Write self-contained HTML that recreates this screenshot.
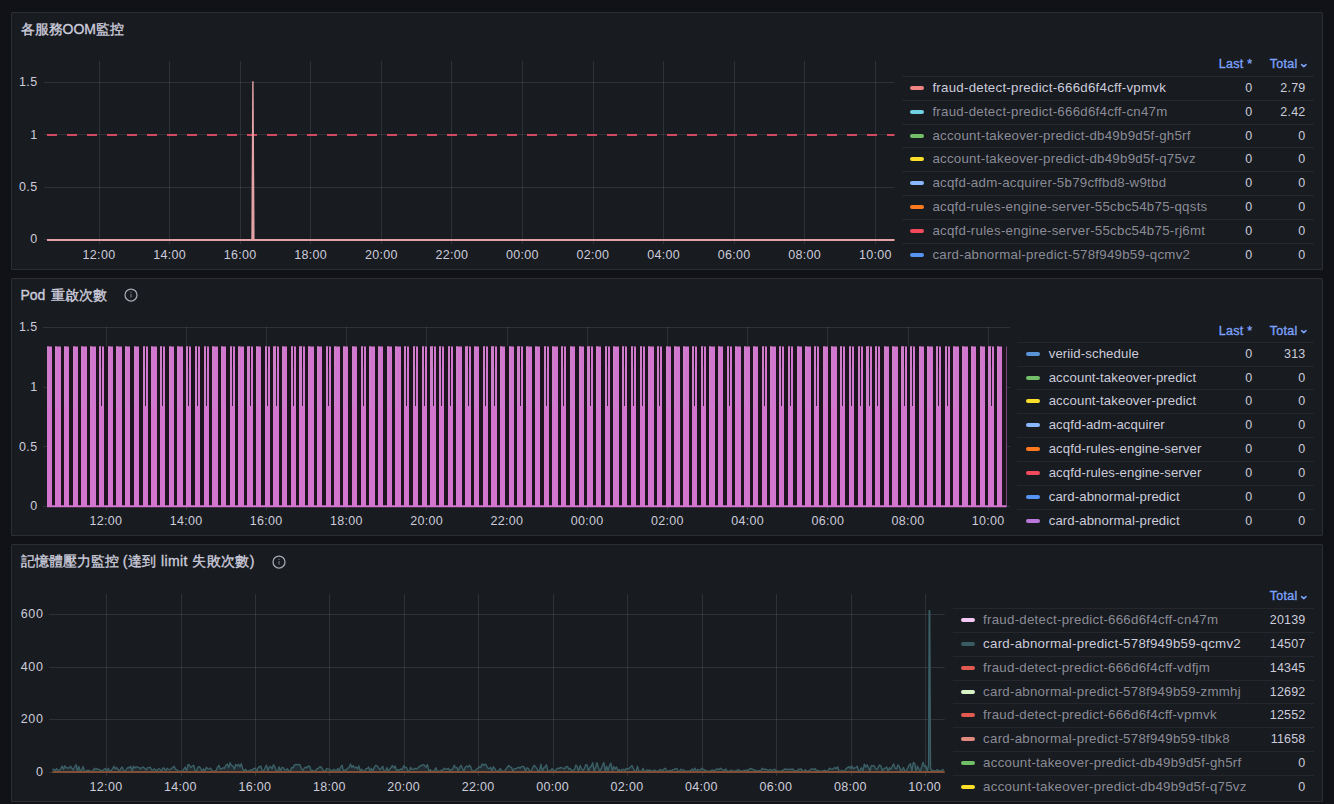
<!DOCTYPE html><html><head><meta charset="utf-8"><style>html,body{margin:0;padding:0;background:#111217;width:1334px;height:804px;overflow:hidden;font-family:"Liberation Sans", sans-serif}</style></head><body><div style="position:relative;width:1334px;height:804px;overflow:hidden">
<div style="position:absolute;left:11px;top:12px;width:1312px;height:258px;box-sizing:border-box;border:1px solid rgba(204,204,220,0.105);border-radius:1.5px;background:#181b1f"></div>
<div style="position:absolute;left:20.50px;top:19.45px;line-height:20px;font-size:14px;color:#ccccdc;font-weight:400;letter-spacing:0px;white-space:nowrap;-webkit-text-stroke:0.35px #ccccdc;">各服務OOM監控</div>
<svg style="position:absolute;left:0;top:0" width="1334" height="804"><line x1="44" y1="82.5" x2="894.5" y2="82.5" stroke="rgba(240,250,255,0.105)" stroke-width="1"/><line x1="44" y1="134.5" x2="894.5" y2="134.5" stroke="rgba(240,250,255,0.105)" stroke-width="1"/><line x1="44" y1="187.5" x2="894.5" y2="187.5" stroke="rgba(240,250,255,0.105)" stroke-width="1"/><line x1="44" y1="239.5" x2="894.5" y2="239.5" stroke="rgba(240,250,255,0.105)" stroke-width="1"/><line x1="99.5" y1="61" x2="99.5" y2="244" stroke="rgba(240,250,255,0.105)" stroke-width="1"/><line x1="169.5" y1="61" x2="169.5" y2="244" stroke="rgba(240,250,255,0.105)" stroke-width="1"/><line x1="240.5" y1="61" x2="240.5" y2="244" stroke="rgba(240,250,255,0.105)" stroke-width="1"/><line x1="310.5" y1="61" x2="310.5" y2="244" stroke="rgba(240,250,255,0.105)" stroke-width="1"/><line x1="381.5" y1="61" x2="381.5" y2="244" stroke="rgba(240,250,255,0.105)" stroke-width="1"/><line x1="451.5" y1="61" x2="451.5" y2="244" stroke="rgba(240,250,255,0.105)" stroke-width="1"/><line x1="522.5" y1="61" x2="522.5" y2="244" stroke="rgba(240,250,255,0.105)" stroke-width="1"/><line x1="593.5" y1="61" x2="593.5" y2="244" stroke="rgba(240,250,255,0.105)" stroke-width="1"/><line x1="663.5" y1="61" x2="663.5" y2="244" stroke="rgba(240,250,255,0.105)" stroke-width="1"/><line x1="734.5" y1="61" x2="734.5" y2="244" stroke="rgba(240,250,255,0.105)" stroke-width="1"/><line x1="804.5" y1="61" x2="804.5" y2="244" stroke="rgba(240,250,255,0.105)" stroke-width="1"/><line x1="875.5" y1="61" x2="875.5" y2="244" stroke="rgba(240,250,255,0.105)" stroke-width="1"/><line x1="47" y1="134.9" x2="894.5" y2="134.9" stroke="#d24a62" stroke-width="2" stroke-dasharray="10 10"/><line x1="47" y1="239.9" x2="894.5" y2="239.9" stroke="#e3a2a6" stroke-width="2"/><path d="M251.3 240.5 L252.2 81.2 L253.6 81.2 L254.6 240.5 Z" fill="#e3a2a6"/></svg>
<div style="position:absolute;right:1296.40px;top:72.17px;line-height:20px;font-size:12.5px;color:#ccccdc;font-weight:400;letter-spacing:0.45px;white-space:nowrap;">1.5</div>
<div style="position:absolute;right:1296.40px;top:124.54px;line-height:20px;font-size:12.5px;color:#ccccdc;font-weight:400;letter-spacing:0.45px;white-space:nowrap;">1</div>
<div style="position:absolute;right:1296.40px;top:176.91px;line-height:20px;font-size:12.5px;color:#ccccdc;font-weight:400;letter-spacing:0.45px;white-space:nowrap;">0.5</div>
<div style="position:absolute;right:1296.40px;top:229.27px;line-height:20px;font-size:12.5px;color:#ccccdc;font-weight:400;letter-spacing:0.45px;white-space:nowrap;">0</div>
<div style="position:absolute;left:-101.00px;width:400px;text-align:center;top:245.37px;line-height:20px;font-size:12.5px;color:#ccccdc;font-weight:400;letter-spacing:0.3px;white-space:nowrap;">12:00</div>
<div style="position:absolute;left:-30.43px;width:400px;text-align:center;top:245.37px;line-height:20px;font-size:12.5px;color:#ccccdc;font-weight:400;letter-spacing:0.3px;white-space:nowrap;">14:00</div>
<div style="position:absolute;left:40.14px;width:400px;text-align:center;top:245.37px;line-height:20px;font-size:12.5px;color:#ccccdc;font-weight:400;letter-spacing:0.3px;white-space:nowrap;">16:00</div>
<div style="position:absolute;left:110.71px;width:400px;text-align:center;top:245.37px;line-height:20px;font-size:12.5px;color:#ccccdc;font-weight:400;letter-spacing:0.3px;white-space:nowrap;">18:00</div>
<div style="position:absolute;left:181.28px;width:400px;text-align:center;top:245.37px;line-height:20px;font-size:12.5px;color:#ccccdc;font-weight:400;letter-spacing:0.3px;white-space:nowrap;">20:00</div>
<div style="position:absolute;left:251.85px;width:400px;text-align:center;top:245.37px;line-height:20px;font-size:12.5px;color:#ccccdc;font-weight:400;letter-spacing:0.3px;white-space:nowrap;">22:00</div>
<div style="position:absolute;left:322.42px;width:400px;text-align:center;top:245.37px;line-height:20px;font-size:12.5px;color:#ccccdc;font-weight:400;letter-spacing:0.3px;white-space:nowrap;">00:00</div>
<div style="position:absolute;left:392.99px;width:400px;text-align:center;top:245.37px;line-height:20px;font-size:12.5px;color:#ccccdc;font-weight:400;letter-spacing:0.3px;white-space:nowrap;">02:00</div>
<div style="position:absolute;left:463.56px;width:400px;text-align:center;top:245.37px;line-height:20px;font-size:12.5px;color:#ccccdc;font-weight:400;letter-spacing:0.3px;white-space:nowrap;">04:00</div>
<div style="position:absolute;left:534.13px;width:400px;text-align:center;top:245.37px;line-height:20px;font-size:12.5px;color:#ccccdc;font-weight:400;letter-spacing:0.3px;white-space:nowrap;">06:00</div>
<div style="position:absolute;left:604.70px;width:400px;text-align:center;top:245.37px;line-height:20px;font-size:12.5px;color:#ccccdc;font-weight:400;letter-spacing:0.3px;white-space:nowrap;">08:00</div>
<div style="position:absolute;left:675.27px;width:400px;text-align:center;top:245.37px;line-height:20px;font-size:12.5px;color:#ccccdc;font-weight:400;letter-spacing:0.3px;white-space:nowrap;">10:00</div>
<div style="position:absolute;right:81.70px;top:54.47px;line-height:20px;font-size:12.5px;color:#7ca2fb;font-weight:400;letter-spacing:0.25px;white-space:nowrap;-webkit-text-stroke:0.35px #7ca2fb;">Last *</div>
<div style="position:absolute;right:36.50px;top:54.47px;line-height:20px;font-size:12.5px;color:#7ca2fb;font-weight:400;letter-spacing:0.25px;white-space:nowrap;-webkit-text-stroke:0.35px #7ca2fb;">Total</div>
<svg style="position:absolute;left:1299px;top:60.7px" width="10" height="8" viewBox="0 0 10 8"><path d="M2.6 3.6 L4.8 5.6 L7.0 3.6" fill="none" stroke="#7ca2fb" stroke-width="1.5" stroke-linecap="round" stroke-linejoin="round"/></svg>
<div style="position:absolute;left:902px;top:76px;width:412px;height:1px;background:rgba(204,204,220,0.075)"></div>
<div style="position:absolute;left:909.8px;top:86px;width:14px;height:4px;border-radius:2px;background:#f08484"></div>
<div style="position:absolute;left:932.40px;top:77.69px;line-height:20px;font-size:13.3px;color:#ccccdc;font-weight:400;letter-spacing:0.25px;white-space:nowrap;">fraud-detect-predict-666d6f4cff-vpmvk</div>
<div style="position:absolute;right:81.70px;top:78.17px;line-height:20px;font-size:12.5px;color:#ccccdc;font-weight:400;letter-spacing:0.2px;white-space:nowrap;">0</div>
<div style="position:absolute;right:28.50px;top:78.17px;line-height:20px;font-size:12.5px;color:#ccccdc;font-weight:400;letter-spacing:0.2px;white-space:nowrap;">2.79</div>
<div style="position:absolute;left:902px;top:100px;width:412px;height:1px;background:rgba(204,204,220,0.075)"></div>
<div style="position:absolute;left:909.8px;top:110px;width:14px;height:4px;border-radius:2px;background:#6ed0e0"></div>
<div style="position:absolute;left:932.40px;top:101.69px;line-height:20px;font-size:13.3px;color:rgba(204,204,220,0.65);font-weight:400;letter-spacing:0.25px;white-space:nowrap;">fraud-detect-predict-666d6f4cff-cn47m</div>
<div style="position:absolute;right:81.70px;top:102.17px;line-height:20px;font-size:12.5px;color:#ccccdc;font-weight:400;letter-spacing:0.2px;white-space:nowrap;">0</div>
<div style="position:absolute;right:28.50px;top:102.17px;line-height:20px;font-size:12.5px;color:#ccccdc;font-weight:400;letter-spacing:0.2px;white-space:nowrap;">2.42</div>
<div style="position:absolute;left:902px;top:124px;width:412px;height:1px;background:rgba(204,204,220,0.075)"></div>
<div style="position:absolute;left:909.8px;top:134px;width:14px;height:4px;border-radius:2px;background:#73bf69"></div>
<div style="position:absolute;left:932.40px;top:125.69px;line-height:20px;font-size:13.3px;color:rgba(204,204,220,0.65);font-weight:400;letter-spacing:0.25px;white-space:nowrap;">account-takeover-predict-db49b9d5f-gh5rf</div>
<div style="position:absolute;right:81.70px;top:126.17px;line-height:20px;font-size:12.5px;color:#ccccdc;font-weight:400;letter-spacing:0.2px;white-space:nowrap;">0</div>
<div style="position:absolute;right:28.50px;top:126.17px;line-height:20px;font-size:12.5px;color:#ccccdc;font-weight:400;letter-spacing:0.2px;white-space:nowrap;">0</div>
<div style="position:absolute;left:902px;top:147px;width:412px;height:1px;background:rgba(204,204,220,0.075)"></div>
<div style="position:absolute;left:909.8px;top:157px;width:14px;height:4px;border-radius:2px;background:#fade2a"></div>
<div style="position:absolute;left:932.40px;top:148.69px;line-height:20px;font-size:13.3px;color:rgba(204,204,220,0.65);font-weight:400;letter-spacing:0.25px;white-space:nowrap;">account-takeover-predict-db49b9d5f-q75vz</div>
<div style="position:absolute;right:81.70px;top:149.17px;line-height:20px;font-size:12.5px;color:#ccccdc;font-weight:400;letter-spacing:0.2px;white-space:nowrap;">0</div>
<div style="position:absolute;right:28.50px;top:149.17px;line-height:20px;font-size:12.5px;color:#ccccdc;font-weight:400;letter-spacing:0.2px;white-space:nowrap;">0</div>
<div style="position:absolute;left:902px;top:171px;width:412px;height:1px;background:rgba(204,204,220,0.075)"></div>
<div style="position:absolute;left:909.8px;top:181px;width:14px;height:4px;border-radius:2px;background:#8ab8ff"></div>
<div style="position:absolute;left:932.40px;top:172.69px;line-height:20px;font-size:13.3px;color:rgba(204,204,220,0.65);font-weight:400;letter-spacing:0.25px;white-space:nowrap;">acqfd-adm-acquirer-5b79cffbd8-w9tbd</div>
<div style="position:absolute;right:81.70px;top:173.17px;line-height:20px;font-size:12.5px;color:#ccccdc;font-weight:400;letter-spacing:0.2px;white-space:nowrap;">0</div>
<div style="position:absolute;right:28.50px;top:173.17px;line-height:20px;font-size:12.5px;color:#ccccdc;font-weight:400;letter-spacing:0.2px;white-space:nowrap;">0</div>
<div style="position:absolute;left:902px;top:195px;width:412px;height:1px;background:rgba(204,204,220,0.075)"></div>
<div style="position:absolute;left:909.8px;top:205px;width:14px;height:4px;border-radius:2px;background:#ff7a1e"></div>
<div style="position:absolute;left:932.40px;top:196.69px;line-height:20px;font-size:13.3px;color:rgba(204,204,220,0.65);font-weight:400;letter-spacing:0.25px;white-space:nowrap;">acqfd-rules-engine-server-55cbc54b75-qqsts</div>
<div style="position:absolute;right:81.70px;top:197.17px;line-height:20px;font-size:12.5px;color:#ccccdc;font-weight:400;letter-spacing:0.2px;white-space:nowrap;">0</div>
<div style="position:absolute;right:28.50px;top:197.17px;line-height:20px;font-size:12.5px;color:#ccccdc;font-weight:400;letter-spacing:0.2px;white-space:nowrap;">0</div>
<div style="position:absolute;left:902px;top:219px;width:412px;height:1px;background:rgba(204,204,220,0.075)"></div>
<div style="position:absolute;left:909.8px;top:229px;width:14px;height:4px;border-radius:2px;background:#f2495c"></div>
<div style="position:absolute;left:932.40px;top:220.69px;line-height:20px;font-size:13.3px;color:rgba(204,204,220,0.65);font-weight:400;letter-spacing:0.25px;white-space:nowrap;">acqfd-rules-engine-server-55cbc54b75-rj6mt</div>
<div style="position:absolute;right:81.70px;top:221.17px;line-height:20px;font-size:12.5px;color:#ccccdc;font-weight:400;letter-spacing:0.2px;white-space:nowrap;">0</div>
<div style="position:absolute;right:28.50px;top:221.17px;line-height:20px;font-size:12.5px;color:#ccccdc;font-weight:400;letter-spacing:0.2px;white-space:nowrap;">0</div>
<div style="position:absolute;left:902px;top:243px;width:412px;height:1px;background:rgba(204,204,220,0.075)"></div>
<div style="position:absolute;left:909.8px;top:253px;width:14px;height:4px;border-radius:2px;background:#5794f2"></div>
<div style="position:absolute;left:932.40px;top:244.69px;line-height:20px;font-size:13.3px;color:rgba(204,204,220,0.65);font-weight:400;letter-spacing:0.25px;white-space:nowrap;">card-abnormal-predict-578f949b59-qcmv2</div>
<div style="position:absolute;right:81.70px;top:245.17px;line-height:20px;font-size:12.5px;color:#ccccdc;font-weight:400;letter-spacing:0.2px;white-space:nowrap;">0</div>
<div style="position:absolute;right:28.50px;top:245.17px;line-height:20px;font-size:12.5px;color:#ccccdc;font-weight:400;letter-spacing:0.2px;white-space:nowrap;">0</div>
<div style="position:absolute;left:11px;top:278px;width:1312px;height:258px;box-sizing:border-box;border:1px solid rgba(204,204,220,0.105);border-radius:1.5px;background:#181b1f"></div>
<div style="position:absolute;left:20.50px;top:284.65px;line-height:20px;font-size:14px;color:#ccccdc;font-weight:400;letter-spacing:0px;white-space:nowrap;-webkit-text-stroke:0.35px #ccccdc;">Pod <span style="margin-left:1.6px">重啟次數</span></div>
<svg style="position:absolute;left:123.0px;top:286.8px" width="16" height="16" viewBox="0 0 16 16"><circle cx="8" cy="8" r="6.0" fill="none" stroke="#a8a9b1" stroke-width="1.25"/><rect x="7.4" y="7.0" width="1.2" height="3.6" rx="0.5" fill="#77787f"/><circle cx="8" cy="5.2" r="0.7" fill="#77787f"/></svg>
<svg style="position:absolute;left:0;top:0" width="1334" height="804"><line x1="43" y1="327.5" x2="1010" y2="327.5" stroke="rgba(240,250,255,0.105)" stroke-width="1"/><line x1="43" y1="387.5" x2="1010" y2="387.5" stroke="rgba(240,250,255,0.105)" stroke-width="1"/><line x1="43" y1="446.5" x2="1010" y2="446.5" stroke="rgba(240,250,255,0.105)" stroke-width="1"/><line x1="43" y1="506.5" x2="1010" y2="506.5" stroke="rgba(240,250,255,0.105)" stroke-width="1"/><line x1="106.5" y1="327" x2="106.5" y2="510" stroke="rgba(240,250,255,0.105)" stroke-width="1"/><line x1="186.5" y1="327" x2="186.5" y2="510" stroke="rgba(240,250,255,0.105)" stroke-width="1"/><line x1="266.5" y1="327" x2="266.5" y2="510" stroke="rgba(240,250,255,0.105)" stroke-width="1"/><line x1="346.5" y1="327" x2="346.5" y2="510" stroke="rgba(240,250,255,0.105)" stroke-width="1"/><line x1="426.5" y1="327" x2="426.5" y2="510" stroke="rgba(240,250,255,0.105)" stroke-width="1"/><line x1="507.5" y1="327" x2="507.5" y2="510" stroke="rgba(240,250,255,0.105)" stroke-width="1"/><line x1="587.5" y1="327" x2="587.5" y2="510" stroke="rgba(240,250,255,0.105)" stroke-width="1"/><line x1="667.5" y1="327" x2="667.5" y2="510" stroke="rgba(240,250,255,0.105)" stroke-width="1"/><line x1="747.5" y1="327" x2="747.5" y2="510" stroke="rgba(240,250,255,0.105)" stroke-width="1"/><line x1="827.5" y1="327" x2="827.5" y2="510" stroke="rgba(240,250,255,0.105)" stroke-width="1"/><line x1="908.5" y1="327" x2="908.5" y2="510" stroke="rgba(240,250,255,0.105)" stroke-width="1"/><line x1="988.5" y1="327" x2="988.5" y2="510" stroke="rgba(240,250,255,0.105)" stroke-width="1"/><rect x="47" y="346.5" width="959.5" height="160" fill="#1d1420"/><path d="M47 346.5h5.00V506.5h-5.00ZM55 346.5h6.00V506.5h-6.00ZM64 346.5h5.00V506.5h-5.00ZM73 346.5h5.00V506.5h-5.00ZM81 346.5h6.00V506.5h-6.00ZM90 346.5h6.00V506.5h-6.00ZM99 346.5h5.00V506.5h-5.00ZM108 346.5h5.00V506.5h-5.00ZM116 346.5h6.00V506.5h-6.00ZM125 346.5h5.00V506.5h-5.00ZM134 346.5h5.00V506.5h-5.00ZM143 346.5h5.00V506.5h-5.00ZM151 346.5h6.00V506.5h-6.00ZM160 346.5h5.00V506.5h-5.00ZM169 346.5h5.00V506.5h-5.00ZM177 346.5h6.00V506.5h-6.00ZM186 346.5h5.00V506.5h-5.00ZM195 346.5h5.00V506.5h-5.00ZM204 346.5h5.00V506.5h-5.00ZM212 346.5h6.00V506.5h-6.00ZM221 346.5h5.00V506.5h-5.00ZM230 346.5h5.00V506.5h-5.00ZM238 346.5h6.00V506.5h-6.00ZM247 346.5h6.00V506.5h-6.00ZM256 346.5h5.00V506.5h-5.00ZM265 346.5h5.00V506.5h-5.00ZM273 346.5h6.00V506.5h-6.00ZM282 346.5h5.00V506.5h-5.00ZM291 346.5h5.00V506.5h-5.00ZM299 346.5h6.00V506.5h-6.00ZM308 346.5h6.00V506.5h-6.00ZM317 346.5h5.00V506.5h-5.00ZM326 346.5h5.00V506.5h-5.00ZM334 346.5h6.00V506.5h-6.00ZM343 346.5h5.00V506.5h-5.00ZM352 346.5h5.00V506.5h-5.00ZM361 346.5h5.00V506.5h-5.00ZM369 346.5h6.00V506.5h-6.00ZM378 346.5h5.00V506.5h-5.00ZM387 346.5h5.00V506.5h-5.00ZM395 346.5h6.00V506.5h-6.00ZM404 346.5h5.00V506.5h-5.00ZM413 346.5h5.00V506.5h-5.00ZM422 346.5h5.00V506.5h-5.00ZM430 346.5h6.00V506.5h-6.00ZM439 346.5h5.00V506.5h-5.00ZM448 346.5h5.00V506.5h-5.00ZM456 346.5h6.00V506.5h-6.00ZM465 346.5h6.00V506.5h-6.00ZM474 346.5h5.00V506.5h-5.00ZM483 346.5h5.00V506.5h-5.00ZM491 346.5h6.00V506.5h-6.00ZM500 346.5h5.00V506.5h-5.00ZM509 346.5h5.00V506.5h-5.00ZM517 346.5h6.00V506.5h-6.00ZM526 346.5h6.00V506.5h-6.00ZM535 346.5h5.00V506.5h-5.00ZM544 346.5h5.00V506.5h-5.00ZM552 346.5h6.00V506.5h-6.00ZM561 346.5h5.00V506.5h-5.00ZM570 346.5h5.00V506.5h-5.00ZM579 346.5h5.00V506.5h-5.00ZM587 346.5h6.00V506.5h-6.00ZM596 346.5h5.00V506.5h-5.00ZM605 346.5h5.00V506.5h-5.00ZM613 346.5h6.00V506.5h-6.00ZM622 346.5h5.00V506.5h-5.00ZM631 346.5h5.00V506.5h-5.00ZM640 346.5h5.00V506.5h-5.00ZM648 346.5h6.00V506.5h-6.00ZM657 346.5h5.00V506.5h-5.00ZM666 346.5h5.00V506.5h-5.00ZM674 346.5h6.00V506.5h-6.00ZM683 346.5h6.00V506.5h-6.00ZM692 346.5h5.00V506.5h-5.00ZM701 346.5h5.00V506.5h-5.00ZM709 346.5h6.00V506.5h-6.00ZM718 346.5h5.00V506.5h-5.00ZM727 346.5h5.00V506.5h-5.00ZM735 346.5h6.00V506.5h-6.00ZM744 346.5h6.00V506.5h-6.00ZM753 346.5h5.00V506.5h-5.00ZM762 346.5h5.00V506.5h-5.00ZM770 346.5h6.00V506.5h-6.00ZM779 346.5h5.00V506.5h-5.00ZM788 346.5h5.00V506.5h-5.00ZM797 346.5h5.00V506.5h-5.00ZM805 346.5h6.00V506.5h-6.00ZM814 346.5h5.00V506.5h-5.00ZM823 346.5h5.00V506.5h-5.00ZM831 346.5h6.00V506.5h-6.00ZM840 346.5h5.00V506.5h-5.00ZM849 346.5h5.00V506.5h-5.00ZM858 346.5h5.00V506.5h-5.00ZM866 346.5h6.00V506.5h-6.00ZM875 346.5h5.00V506.5h-5.00ZM884 346.5h5.00V506.5h-5.00ZM892 346.5h6.00V506.5h-6.00ZM901 346.5h6.00V506.5h-6.00ZM910 346.5h5.00V506.5h-5.00ZM919 346.5h5.00V506.5h-5.00ZM927 346.5h6.00V506.5h-6.00ZM936 346.5h5.00V506.5h-5.00ZM945 346.5h5.00V506.5h-5.00ZM953 346.5h6.00V506.5h-6.00ZM962 346.5h6.00V506.5h-6.00ZM971 346.5h5.00V506.5h-5.00ZM980 346.5h5.00V506.5h-5.00ZM988 346.5h6.00V506.5h-6.00ZM997 346.5h5.00V506.5h-5.00ZM1006 346.5h0.50V506.5h-0.50Z" fill="#d276d0"/><path d="M47 346.5h2V406h-2ZM55 346.5h2V406h-2ZM64 346.5h2V406h-2ZM73 346.5h2V406h-2ZM81 346.5h2V406h-2ZM90 346.5h2V406h-2ZM99 346.5h2V406h-2ZM108 346.5h2V406h-2ZM116 346.5h2V406h-2ZM125 346.5h2V406h-2ZM134 346.5h2V406h-2ZM143 346.5h2V406h-2ZM151 346.5h2V406h-2ZM160 346.5h2V406h-2ZM169 346.5h2V406h-2ZM177 346.5h2V406h-2ZM186 346.5h2V406h-2ZM195 346.5h2V406h-2ZM204 346.5h2V406h-2ZM212 346.5h2V406h-2ZM221 346.5h2V406h-2ZM230 346.5h2V406h-2ZM238 346.5h2V406h-2ZM247 346.5h3V406h-3ZM256 346.5h2V406h-2ZM265 346.5h2V406h-2ZM273 346.5h3V406h-3ZM282 346.5h2V406h-2ZM291 346.5h2V406h-2ZM299 346.5h3V406h-3ZM308 346.5h2V406h-2ZM317 346.5h2V406h-2ZM326 346.5h2V406h-2ZM334 346.5h2V406h-2ZM343 346.5h2V406h-2ZM352 346.5h2V406h-2ZM361 346.5h2V406h-2ZM369 346.5h2V406h-2ZM378 346.5h2V406h-2ZM387 346.5h2V406h-2ZM395 346.5h2V406h-2ZM404 346.5h2V406h-2ZM413 346.5h2V406h-2ZM422 346.5h2V406h-2ZM430 346.5h3V406h-3ZM439 346.5h2V406h-2ZM448 346.5h2V406h-2ZM456 346.5h2V406h-2ZM465 346.5h3V406h-3ZM474 346.5h2V406h-2ZM483 346.5h2V406h-2ZM491 346.5h3V406h-3ZM500 346.5h2V406h-2ZM509 346.5h2V406h-2ZM517 346.5h3V406h-3ZM526 346.5h2V406h-2ZM535 346.5h2V406h-2ZM544 346.5h2V406h-2ZM552 346.5h2V406h-2ZM561 346.5h2V406h-2ZM570 346.5h2V406h-2ZM579 346.5h2V406h-2ZM587 346.5h3V406h-3ZM596 346.5h2V406h-2ZM605 346.5h2V406h-2ZM613 346.5h2V406h-2ZM622 346.5h2V406h-2ZM631 346.5h2V406h-2ZM640 346.5h2V406h-2ZM648 346.5h2V406h-2ZM657 346.5h2V406h-2ZM666 346.5h2V406h-2ZM674 346.5h2V406h-2ZM683 346.5h2V406h-2ZM692 346.5h2V406h-2ZM701 346.5h2V406h-2ZM709 346.5h2V406h-2ZM718 346.5h2V406h-2ZM727 346.5h2V406h-2ZM735 346.5h2V406h-2ZM744 346.5h2V406h-2ZM753 346.5h2V406h-2ZM762 346.5h2V406h-2ZM770 346.5h2V406h-2ZM779 346.5h2V406h-2ZM788 346.5h2V406h-2ZM797 346.5h2V406h-2ZM805 346.5h2V406h-2ZM814 346.5h2V406h-2ZM823 346.5h2V406h-2ZM831 346.5h2V406h-2ZM840 346.5h2V406h-2ZM849 346.5h2V406h-2ZM858 346.5h2V406h-2ZM866 346.5h3V406h-3ZM875 346.5h2V406h-2ZM884 346.5h2V406h-2ZM892 346.5h2V406h-2ZM901 346.5h3V406h-3ZM910 346.5h2V406h-2ZM919 346.5h2V406h-2ZM927 346.5h2V406h-2ZM936 346.5h2V406h-2ZM945 346.5h2V406h-2ZM953 346.5h2V406h-2ZM962 346.5h2V406h-2ZM971 346.5h2V406h-2ZM980 346.5h2V406h-2ZM988 346.5h3V406h-3ZM997 346.5h2V406h-2Z" fill="#cd7fca"/><path d="M101 346.5h1V367h-1ZM145 346.5h1V367h-1ZM162 346.5h1V367h-1ZM188 346.5h1V367h-1ZM197 346.5h1V367h-1ZM206 346.5h1V367h-1ZM232 346.5h1V367h-1ZM250 346.5h1V367h-1ZM267 346.5h1V367h-1ZM276 346.5h1V367h-1ZM293 346.5h1V367h-1ZM302 346.5h1V367h-1ZM328 346.5h1V367h-1ZM363 346.5h1V367h-1ZM406 346.5h1V367h-1ZM415 346.5h1V367h-1ZM424 346.5h1V367h-1ZM433 346.5h1V367h-1ZM441 346.5h1V367h-1ZM450 346.5h1V367h-1ZM468 346.5h1V367h-1ZM485 346.5h1V367h-1ZM494 346.5h1V367h-1ZM520 346.5h1V367h-1ZM546 346.5h1V367h-1ZM563 346.5h1V367h-1ZM590 346.5h1V367h-1ZM607 346.5h1V367h-1ZM624 346.5h1V367h-1ZM633 346.5h1V367h-1ZM642 346.5h1V367h-1ZM659 346.5h1V367h-1ZM694 346.5h1V367h-1ZM703 346.5h1V367h-1ZM729 346.5h1V367h-1ZM764 346.5h1V367h-1ZM781 346.5h1V367h-1ZM790 346.5h1V367h-1ZM816 346.5h1V367h-1ZM842 346.5h1V367h-1ZM851 346.5h1V367h-1ZM860 346.5h1V367h-1ZM869 346.5h1V367h-1ZM877 346.5h1V367h-1ZM904 346.5h1V367h-1ZM912 346.5h1V367h-1ZM938 346.5h1V367h-1ZM947 346.5h1V367h-1ZM991 346.5h1V367h-1Z" fill="#1a141c"/><path d="M101 367h1V406h-1ZM145 367h1V406h-1ZM162 367h1V406h-1ZM188 367h1V406h-1ZM197 367h1V406h-1ZM206 367h1V406h-1ZM232 367h1V406h-1ZM250 367h1V406h-1ZM267 367h1V406h-1ZM276 367h1V406h-1ZM293 367h1V406h-1ZM302 367h1V406h-1ZM328 367h1V406h-1ZM363 367h1V406h-1ZM406 367h1V406h-1ZM415 367h1V406h-1ZM424 367h1V406h-1ZM433 367h1V406h-1ZM441 367h1V406h-1ZM450 367h1V406h-1ZM468 367h1V406h-1ZM485 367h1V406h-1ZM494 367h1V406h-1ZM520 367h1V406h-1ZM546 367h1V406h-1ZM563 367h1V406h-1ZM590 367h1V406h-1ZM607 367h1V406h-1ZM624 367h1V406h-1ZM633 367h1V406h-1ZM642 367h1V406h-1ZM659 367h1V406h-1ZM694 367h1V406h-1ZM703 367h1V406h-1ZM729 367h1V406h-1ZM764 367h1V406h-1ZM781 367h1V406h-1ZM790 367h1V406h-1ZM816 367h1V406h-1ZM842 367h1V406h-1ZM851 367h1V406h-1ZM860 367h1V406h-1ZM869 367h1V406h-1ZM877 367h1V406h-1ZM904 367h1V406h-1ZM912 367h1V406h-1ZM938 367h1V406h-1ZM947 367h1V406h-1ZM991 367h1V406h-1Z" fill="#2e1c33"/><line x1="47" y1="506.2" x2="1006.5" y2="506.2" stroke="#d276d0" stroke-width="2"/></svg>
<div style="position:absolute;right:1296.40px;top:317.17px;line-height:20px;font-size:12.5px;color:#ccccdc;font-weight:400;letter-spacing:0.45px;white-space:nowrap;">1.5</div>
<div style="position:absolute;right:1296.40px;top:376.87px;line-height:20px;font-size:12.5px;color:#ccccdc;font-weight:400;letter-spacing:0.45px;white-space:nowrap;">1</div>
<div style="position:absolute;right:1296.40px;top:436.57px;line-height:20px;font-size:12.5px;color:#ccccdc;font-weight:400;letter-spacing:0.45px;white-space:nowrap;">0.5</div>
<div style="position:absolute;right:1296.40px;top:496.27px;line-height:20px;font-size:12.5px;color:#ccccdc;font-weight:400;letter-spacing:0.45px;white-space:nowrap;">0</div>
<div style="position:absolute;left:-94.20px;width:400px;text-align:center;top:511.17px;line-height:20px;font-size:12.5px;color:#ccccdc;font-weight:400;letter-spacing:0.3px;white-space:nowrap;">12:00</div>
<div style="position:absolute;left:-13.98px;width:400px;text-align:center;top:511.17px;line-height:20px;font-size:12.5px;color:#ccccdc;font-weight:400;letter-spacing:0.3px;white-space:nowrap;">14:00</div>
<div style="position:absolute;left:66.24px;width:400px;text-align:center;top:511.17px;line-height:20px;font-size:12.5px;color:#ccccdc;font-weight:400;letter-spacing:0.3px;white-space:nowrap;">16:00</div>
<div style="position:absolute;left:146.46px;width:400px;text-align:center;top:511.17px;line-height:20px;font-size:12.5px;color:#ccccdc;font-weight:400;letter-spacing:0.3px;white-space:nowrap;">18:00</div>
<div style="position:absolute;left:226.68px;width:400px;text-align:center;top:511.17px;line-height:20px;font-size:12.5px;color:#ccccdc;font-weight:400;letter-spacing:0.3px;white-space:nowrap;">20:00</div>
<div style="position:absolute;left:306.90px;width:400px;text-align:center;top:511.17px;line-height:20px;font-size:12.5px;color:#ccccdc;font-weight:400;letter-spacing:0.3px;white-space:nowrap;">22:00</div>
<div style="position:absolute;left:387.12px;width:400px;text-align:center;top:511.17px;line-height:20px;font-size:12.5px;color:#ccccdc;font-weight:400;letter-spacing:0.3px;white-space:nowrap;">00:00</div>
<div style="position:absolute;left:467.34px;width:400px;text-align:center;top:511.17px;line-height:20px;font-size:12.5px;color:#ccccdc;font-weight:400;letter-spacing:0.3px;white-space:nowrap;">02:00</div>
<div style="position:absolute;left:547.56px;width:400px;text-align:center;top:511.17px;line-height:20px;font-size:12.5px;color:#ccccdc;font-weight:400;letter-spacing:0.3px;white-space:nowrap;">04:00</div>
<div style="position:absolute;left:627.78px;width:400px;text-align:center;top:511.17px;line-height:20px;font-size:12.5px;color:#ccccdc;font-weight:400;letter-spacing:0.3px;white-space:nowrap;">06:00</div>
<div style="position:absolute;left:708.00px;width:400px;text-align:center;top:511.17px;line-height:20px;font-size:12.5px;color:#ccccdc;font-weight:400;letter-spacing:0.3px;white-space:nowrap;">08:00</div>
<div style="position:absolute;left:788.22px;width:400px;text-align:center;top:511.17px;line-height:20px;font-size:12.5px;color:#ccccdc;font-weight:400;letter-spacing:0.3px;white-space:nowrap;">10:00</div>
<div style="position:absolute;right:81.70px;top:320.67px;line-height:20px;font-size:12.5px;color:#7ca2fb;font-weight:400;letter-spacing:0.25px;white-space:nowrap;-webkit-text-stroke:0.35px #7ca2fb;">Last *</div>
<div style="position:absolute;right:36.50px;top:320.67px;line-height:20px;font-size:12.5px;color:#7ca2fb;font-weight:400;letter-spacing:0.25px;white-space:nowrap;-webkit-text-stroke:0.35px #7ca2fb;">Total</div>
<svg style="position:absolute;left:1299px;top:326.9px" width="10" height="8" viewBox="0 0 10 8"><path d="M2.6 3.6 L4.8 5.6 L7.0 3.6" fill="none" stroke="#7ca2fb" stroke-width="1.5" stroke-linecap="round" stroke-linejoin="round"/></svg>
<div style="position:absolute;left:1017.4px;top:342px;width:296.6px;height:1px;background:rgba(204,204,220,0.075)"></div>
<div style="position:absolute;left:1026.2px;top:352px;width:14px;height:4px;border-radius:2px;background:#5a94d8"></div>
<div style="position:absolute;left:1048.70px;top:343.73px;line-height:20px;font-size:13.2px;color:#ccccdc;font-weight:400;letter-spacing:0.1px;white-space:nowrap;">veriid-schedule</div>
<div style="position:absolute;right:81.70px;top:344.17px;line-height:20px;font-size:12.5px;color:#ccccdc;font-weight:400;letter-spacing:0.2px;white-space:nowrap;">0</div>
<div style="position:absolute;right:28.50px;top:344.17px;line-height:20px;font-size:12.5px;color:#ccccdc;font-weight:400;letter-spacing:0.2px;white-space:nowrap;">313</div>
<div style="position:absolute;left:1017.4px;top:366px;width:296.6px;height:1px;background:rgba(204,204,220,0.075)"></div>
<div style="position:absolute;left:1026.2px;top:376px;width:14px;height:4px;border-radius:2px;background:#73bf69"></div>
<div style="position:absolute;left:1048.70px;top:367.73px;line-height:20px;font-size:13.2px;color:#ccccdc;font-weight:400;letter-spacing:0.1px;white-space:nowrap;">account-takeover-predict</div>
<div style="position:absolute;right:81.70px;top:368.17px;line-height:20px;font-size:12.5px;color:#ccccdc;font-weight:400;letter-spacing:0.2px;white-space:nowrap;">0</div>
<div style="position:absolute;right:28.50px;top:368.17px;line-height:20px;font-size:12.5px;color:#ccccdc;font-weight:400;letter-spacing:0.2px;white-space:nowrap;">0</div>
<div style="position:absolute;left:1017.4px;top:389px;width:296.6px;height:1px;background:rgba(204,204,220,0.075)"></div>
<div style="position:absolute;left:1026.2px;top:399px;width:14px;height:4px;border-radius:2px;background:#fade2a"></div>
<div style="position:absolute;left:1048.70px;top:390.73px;line-height:20px;font-size:13.2px;color:#ccccdc;font-weight:400;letter-spacing:0.1px;white-space:nowrap;">account-takeover-predict</div>
<div style="position:absolute;right:81.70px;top:391.17px;line-height:20px;font-size:12.5px;color:#ccccdc;font-weight:400;letter-spacing:0.2px;white-space:nowrap;">0</div>
<div style="position:absolute;right:28.50px;top:391.17px;line-height:20px;font-size:12.5px;color:#ccccdc;font-weight:400;letter-spacing:0.2px;white-space:nowrap;">0</div>
<div style="position:absolute;left:1017.4px;top:413px;width:296.6px;height:1px;background:rgba(204,204,220,0.075)"></div>
<div style="position:absolute;left:1026.2px;top:423px;width:14px;height:4px;border-radius:2px;background:#8ab8ff"></div>
<div style="position:absolute;left:1048.70px;top:414.73px;line-height:20px;font-size:13.2px;color:#ccccdc;font-weight:400;letter-spacing:0.1px;white-space:nowrap;">acqfd-adm-acquirer</div>
<div style="position:absolute;right:81.70px;top:415.17px;line-height:20px;font-size:12.5px;color:#ccccdc;font-weight:400;letter-spacing:0.2px;white-space:nowrap;">0</div>
<div style="position:absolute;right:28.50px;top:415.17px;line-height:20px;font-size:12.5px;color:#ccccdc;font-weight:400;letter-spacing:0.2px;white-space:nowrap;">0</div>
<div style="position:absolute;left:1017.4px;top:437px;width:296.6px;height:1px;background:rgba(204,204,220,0.075)"></div>
<div style="position:absolute;left:1026.2px;top:447px;width:14px;height:4px;border-radius:2px;background:#ff7a1e"></div>
<div style="position:absolute;left:1048.70px;top:438.73px;line-height:20px;font-size:13.2px;color:#ccccdc;font-weight:400;letter-spacing:0.1px;white-space:nowrap;">acqfd-rules-engine-server</div>
<div style="position:absolute;right:81.70px;top:439.17px;line-height:20px;font-size:12.5px;color:#ccccdc;font-weight:400;letter-spacing:0.2px;white-space:nowrap;">0</div>
<div style="position:absolute;right:28.50px;top:439.17px;line-height:20px;font-size:12.5px;color:#ccccdc;font-weight:400;letter-spacing:0.2px;white-space:nowrap;">0</div>
<div style="position:absolute;left:1017.4px;top:461px;width:296.6px;height:1px;background:rgba(204,204,220,0.075)"></div>
<div style="position:absolute;left:1026.2px;top:471px;width:14px;height:4px;border-radius:2px;background:#f2495c"></div>
<div style="position:absolute;left:1048.70px;top:462.73px;line-height:20px;font-size:13.2px;color:#ccccdc;font-weight:400;letter-spacing:0.1px;white-space:nowrap;">acqfd-rules-engine-server</div>
<div style="position:absolute;right:81.70px;top:463.17px;line-height:20px;font-size:12.5px;color:#ccccdc;font-weight:400;letter-spacing:0.2px;white-space:nowrap;">0</div>
<div style="position:absolute;right:28.50px;top:463.17px;line-height:20px;font-size:12.5px;color:#ccccdc;font-weight:400;letter-spacing:0.2px;white-space:nowrap;">0</div>
<div style="position:absolute;left:1017.4px;top:485px;width:296.6px;height:1px;background:rgba(204,204,220,0.075)"></div>
<div style="position:absolute;left:1026.2px;top:495px;width:14px;height:4px;border-radius:2px;background:#5794f2"></div>
<div style="position:absolute;left:1048.70px;top:486.73px;line-height:20px;font-size:13.2px;color:#ccccdc;font-weight:400;letter-spacing:0.1px;white-space:nowrap;">card-abnormal-predict</div>
<div style="position:absolute;right:81.70px;top:487.17px;line-height:20px;font-size:12.5px;color:#ccccdc;font-weight:400;letter-spacing:0.2px;white-space:nowrap;">0</div>
<div style="position:absolute;right:28.50px;top:487.17px;line-height:20px;font-size:12.5px;color:#ccccdc;font-weight:400;letter-spacing:0.2px;white-space:nowrap;">0</div>
<div style="position:absolute;left:1017.4px;top:509px;width:296.6px;height:1px;background:rgba(204,204,220,0.075)"></div>
<div style="position:absolute;left:1026.2px;top:519px;width:14px;height:4px;border-radius:2px;background:#b877d9"></div>
<div style="position:absolute;left:1048.70px;top:510.73px;line-height:20px;font-size:13.2px;color:#ccccdc;font-weight:400;letter-spacing:0.1px;white-space:nowrap;">card-abnormal-predict</div>
<div style="position:absolute;right:81.70px;top:511.17px;line-height:20px;font-size:12.5px;color:#ccccdc;font-weight:400;letter-spacing:0.2px;white-space:nowrap;">0</div>
<div style="position:absolute;right:28.50px;top:511.17px;line-height:20px;font-size:12.5px;color:#ccccdc;font-weight:400;letter-spacing:0.2px;white-space:nowrap;">0</div>
<div style="position:absolute;left:11px;top:544px;width:1312px;height:258px;box-sizing:border-box;border:1px solid rgba(204,204,220,0.105);border-radius:1.5px;background:#181b1f"></div>
<div style="position:absolute;left:20.50px;top:550.65px;line-height:20px;font-size:14px;color:#ccccdc;font-weight:400;letter-spacing:0px;white-space:nowrap;-webkit-text-stroke:0.35px #ccccdc;">記憶體壓力監控<span style="letter-spacing:0.4px"> (達到 limit 失敗次數)</span></div>
<svg style="position:absolute;left:270.7px;top:553.9px" width="16" height="16" viewBox="0 0 16 16"><circle cx="8" cy="8" r="6.0" fill="none" stroke="#a8a9b1" stroke-width="1.25"/><rect x="7.4" y="7.0" width="1.2" height="3.6" rx="0.5" fill="#77787f"/><circle cx="8" cy="5.2" r="0.7" fill="#77787f"/></svg>
<svg style="position:absolute;left:0;top:0" width="1334" height="804"><line x1="49" y1="614.5" x2="944.7" y2="614.5" stroke="rgba(240,250,255,0.105)" stroke-width="1"/><line x1="49" y1="667.5" x2="944.7" y2="667.5" stroke="rgba(240,250,255,0.105)" stroke-width="1"/><line x1="49" y1="719.5" x2="944.7" y2="719.5" stroke="rgba(240,250,255,0.105)" stroke-width="1"/><line x1="49" y1="772.5" x2="944.7" y2="772.5" stroke="rgba(240,250,255,0.105)" stroke-width="1"/><line x1="106.5" y1="594" x2="106.5" y2="776" stroke="rgba(240,250,255,0.105)" stroke-width="1"/><line x1="181.5" y1="594" x2="181.5" y2="776" stroke="rgba(240,250,255,0.105)" stroke-width="1"/><line x1="255.5" y1="594" x2="255.5" y2="776" stroke="rgba(240,250,255,0.105)" stroke-width="1"/><line x1="329.5" y1="594" x2="329.5" y2="776" stroke="rgba(240,250,255,0.105)" stroke-width="1"/><line x1="404.5" y1="594" x2="404.5" y2="776" stroke="rgba(240,250,255,0.105)" stroke-width="1"/><line x1="478.5" y1="594" x2="478.5" y2="776" stroke="rgba(240,250,255,0.105)" stroke-width="1"/><line x1="553.5" y1="594" x2="553.5" y2="776" stroke="rgba(240,250,255,0.105)" stroke-width="1"/><line x1="627.5" y1="594" x2="627.5" y2="776" stroke="rgba(240,250,255,0.105)" stroke-width="1"/><line x1="702.5" y1="594" x2="702.5" y2="776" stroke="rgba(240,250,255,0.105)" stroke-width="1"/><line x1="776.5" y1="594" x2="776.5" y2="776" stroke="rgba(240,250,255,0.105)" stroke-width="1"/><line x1="851.5" y1="594" x2="851.5" y2="776" stroke="rgba(240,250,255,0.105)" stroke-width="1"/><line x1="925.5" y1="594" x2="925.5" y2="776" stroke="rgba(240,250,255,0.105)" stroke-width="1"/><path d="M52.3 769.6 L53.7 769.2 L55.1 771.2 L56.5 768.7 L57.9 770.2 L59.3 770.7 L60.7 768.8 L62.1 766.1 L63.5 769.5 L64.9 765.8 L66.3 767.9 L67.7 767.7 L69.1 768.3 L70.5 766.2 L71.9 768.3 L73.3 770.0 L74.7 767.0 L76.1 764.6 L77.5 771.2 L78.9 766.5 L80.3 771.2 L81.7 769.9 L83.1 766.4 L84.5 771.2 L85.9 771.2 L87.3 770.5 L88.7 770.2 L90.1 771.2 L91.5 771.2 L92.9 771.2 L94.3 768.3 L95.7 769.6 L97.1 768.5 L98.5 769.6 L99.9 769.6 L101.3 771.2 L102.7 770.3 L104.1 769.4 L105.5 768.6 L106.9 771.2 L108.3 768.3 L109.7 771.2 L111.1 770.5 L112.5 768.9 L113.9 766.2 L115.3 768.9 L116.7 767.6 L118.1 769.5 L119.5 771.2 L120.9 768.2 L122.3 767.1 L123.7 771.2 L125.1 771.0 L126.5 769.1 L127.9 767.5 L129.3 767.7 L130.7 766.2 L132.1 771.2 L133.5 766.2 L134.9 768.0 L136.3 766.7 L137.7 767.3 L139.1 767.6 L140.5 768.9 L141.9 767.5 L143.3 767.1 L144.7 768.6 L146.1 770.1 L147.5 767.8 L148.9 767.6 L150.3 767.2 L151.7 769.9 L153.1 770.0 L154.5 768.7 L155.9 770.4 L157.3 770.3 L158.7 768.6 L160.1 769.3 L161.5 771.2 L162.9 768.0 L164.3 768.2 L165.7 771.2 L167.1 768.2 L168.5 769.3 L169.9 769.7 L171.3 768.6 L172.7 767.5 L174.1 766.2 L175.5 769.6 L176.9 769.6 L178.3 771.2 L179.7 771.1 L181.1 771.2 L182.5 771.2 L183.9 769.0 L185.3 767.1 L186.7 771.2 L188.1 764.4 L189.5 765.4 L190.9 767.4 L192.3 766.3 L193.7 765.2 L195.1 771.2 L196.5 770.6 L197.9 767.2 L199.3 766.7 L200.7 768.2 L202.1 771.2 L203.5 768.8 L204.9 771.2 L206.3 767.3 L207.7 768.7 L209.1 769.0 L210.5 768.1 L211.9 770.2 L213.3 771.2 L214.7 771.2 L216.1 770.5 L217.5 767.4 L218.9 765.3 L220.3 769.0 L221.7 769.0 L223.1 767.7 L224.5 768.4 L225.9 765.3 L227.3 763.9 L228.7 767.8 L230.1 762.7 L231.5 765.5 L232.9 766.0 L234.3 769.2 L235.7 764.5 L237.1 766.1 L238.5 764.3 L239.9 767.0 L241.3 763.6 L242.7 768.8 L244.1 771.2 L245.5 769.2 L246.9 771.2 L248.3 771.2 L249.7 770.5 L251.1 769.7 L252.5 770.2 L253.9 768.5 L255.3 768.1 L256.7 771.2 L258.1 767.7 L259.5 766.6 L260.9 766.3 L262.3 771.2 L263.7 770.8 L265.1 767.8 L266.5 765.2 L267.9 771.2 L269.3 767.0 L270.7 766.6 L272.1 769.0 L273.5 764.8 L274.9 766.9 L276.3 771.2 L277.7 771.2 L279.1 766.8 L280.5 771.2 L281.9 767.5 L283.3 767.6 L284.7 770.0 L286.1 769.9 L287.5 768.8 L288.9 771.2 L290.3 771.2 L291.7 767.5 L293.1 767.9 L294.5 764.9 L295.9 764.4 L297.3 764.7 L298.7 764.4 L300.1 764.9 L301.5 768.9 L302.9 770.5 L304.3 768.0 L305.7 767.2 L307.1 767.5 L308.5 766.0 L309.9 766.7 L311.3 771.2 L312.7 770.3 L314.1 771.2 L315.5 770.8 L316.9 769.0 L318.3 768.3 L319.7 767.0 L321.1 766.8 L322.5 769.2 L323.9 771.2 L325.3 770.9 L326.7 768.7 L328.1 769.1 L329.5 769.2 L330.9 770.5 L332.3 771.2 L333.7 769.2 L335.1 770.3 L336.5 770.6 L337.9 768.4 L339.3 771.2 L340.7 767.1 L342.1 765.3 L343.5 771.2 L344.9 770.0 L346.3 770.1 L347.7 768.1 L349.1 767.6 L350.5 763.9 L351.9 767.6 L353.3 765.5 L354.7 768.0 L356.1 767.0 L357.5 768.9 L358.9 765.9 L360.3 771.2 L361.7 769.2 L363.1 771.2 L364.5 771.2 L365.9 768.9 L367.3 768.4 L368.7 767.1 L370.1 771.2 L371.5 768.4 L372.9 771.2 L374.3 767.4 L375.7 765.3 L377.1 765.8 L378.5 767.7 L379.9 769.8 L381.3 768.3 L382.7 766.3 L384.1 771.2 L385.5 771.2 L386.9 767.4 L388.3 771.2 L389.7 769.2 L391.1 767.5 L392.5 765.5 L393.9 768.0 L395.3 766.1 L396.7 771.2 L398.1 769.8 L399.5 770.1 L400.9 768.9 L402.3 769.9 L403.7 765.8 L405.1 767.5 L406.5 767.5 L407.9 771.2 L409.3 770.9 L410.7 767.3 L412.1 769.4 L413.5 769.6 L414.9 768.3 L416.3 768.8 L417.7 768.1 L419.1 766.9 L420.5 765.8 L421.9 765.5 L423.3 764.6 L424.7 765.5 L426.1 767.3 L427.5 764.6 L428.9 771.2 L430.3 769.6 L431.7 771.2 L433.1 771.2 L434.5 770.2 L435.9 767.8 L437.3 771.2 L438.7 771.2 L440.1 771.2 L441.5 770.1 L442.9 770.0 L444.3 768.2 L445.7 769.1 L447.1 769.0 L448.5 768.3 L449.9 771.2 L451.3 769.5 L452.7 769.5 L454.1 765.1 L455.5 767.8 L456.9 767.5 L458.3 771.2 L459.7 767.2 L461.1 765.3 L462.5 768.7 L463.9 771.2 L465.3 767.0 L466.7 766.1 L468.1 767.1 L469.5 765.2 L470.9 767.1 L472.3 771.2 L473.7 771.2 L475.1 770.4 L476.5 769.3 L477.9 768.2 L479.3 766.7 L480.7 767.5 L482.1 763.9 L483.5 765.4 L484.9 764.1 L486.3 765.1 L487.7 768.0 L489.1 768.8 L490.5 767.3 L491.9 771.2 L493.3 766.8 L494.7 768.4 L496.1 771.2 L497.5 771.2 L498.9 770.4 L500.3 768.4 L501.7 771.2 L503.1 771.2 L504.5 771.2 L505.9 769.1 L507.3 767.3 L508.7 765.5 L510.1 766.8 L511.5 767.3 L512.9 771.2 L514.3 768.8 L515.7 768.6 L517.1 768.2 L518.5 767.1 L519.9 768.2 L521.3 766.6 L522.7 766.4 L524.1 767.0 L525.5 771.2 L526.9 767.8 L528.3 768.3 L529.7 771.2 L531.1 771.2 L532.5 768.2 L533.9 765.4 L535.3 766.3 L536.7 768.3 L538.1 771.2 L539.5 770.3 L540.9 764.3 L542.3 771.2 L543.7 768.1 L545.1 766.9 L546.5 764.8 L547.9 771.2 L549.3 771.2 L550.7 770.5 L552.1 768.7 L553.5 770.3 L554.9 771.2 L556.3 769.4 L557.7 768.1 L559.1 768.6 L560.5 767.4 L561.9 767.9 L563.3 768.1 L564.7 768.9 L566.1 766.6 L567.5 766.4 L568.9 769.4 L570.3 768.2 L571.7 771.2 L573.1 769.9 L574.5 769.5 L575.9 765.2 L577.3 766.9 L578.7 771.2 L580.1 765.5 L581.5 768.7 L582.9 770.4 L584.3 768.7 L585.7 764.7 L587.1 765.0 L588.5 771.2 L589.9 767.4 L591.3 766.4 L592.7 762.7 L594.1 771.2 L595.5 767.6 L596.9 762.7 L598.3 767.2 L599.7 771.2 L601.1 768.9 L602.5 765.3 L603.9 762.6 L605.3 771.2 L606.7 766.1 L608.1 771.2 L609.5 765.5 L610.9 763.2 L612.3 771.2 L613.7 766.5 L615.1 769.2 L616.5 766.9 L617.9 771.2 L619.3 769.5 L620.7 771.2 L622.1 769.5 L623.5 769.4 L624.9 770.4 L626.3 768.4 L627.7 769.2 L629.1 768.2 L630.5 766.9 L631.9 765.4 L633.3 768.3 L634.7 771.2 L636.1 771.2 L637.5 766.2 L638.9 771.2 L640.3 771.2 L641.7 771.0 L643.1 768.3 L644.5 771.2 L645.9 771.2 L647.3 769.8 L648.7 770.6 L650.1 769.9 L651.5 771.2 L652.9 771.1 L654.3 770.1 L655.7 770.7 L657.1 771.2 L658.5 771.2 L659.9 769.5 L661.3 769.9 L662.7 770.7 L664.1 769.0 L665.5 768.2 L666.9 771.2 L668.3 771.2 L669.7 770.3 L671.1 771.2 L672.5 769.7 L673.9 769.6 L675.3 768.8 L676.7 768.4 L678.1 771.2 L679.5 771.1 L680.9 769.3 L682.3 769.7 L683.7 769.9 L685.1 771.2 L686.5 771.2 L687.9 771.2 L689.3 771.2 L690.7 770.3 L692.1 769.1 L693.5 770.4 L694.9 768.2 L696.3 771.2 L697.7 769.3 L699.1 769.9 L700.5 770.0 L701.9 768.2 L703.3 769.5 L704.7 770.0 L706.1 770.7 L707.5 771.2 L708.9 771.2 L710.3 771.2 L711.7 770.1 L713.1 770.3 L714.5 770.6 L715.9 769.5 L717.3 768.9 L718.7 769.8 L720.1 768.2 L721.5 769.1 L722.9 769.9 L724.3 770.4 L725.7 768.9 L727.1 771.2 L728.5 771.2 L729.9 771.1 L731.3 770.1 L732.7 771.2 L734.1 770.8 L735.5 771.2 L736.9 770.3 L738.3 769.5 L739.7 770.6 L741.1 770.9 L742.5 771.2 L743.9 770.2 L745.3 770.9 L746.7 769.9 L748.1 770.4 L749.5 769.0 L750.9 768.5 L752.3 769.1 L753.7 770.0 L755.1 770.0 L756.5 771.2 L757.9 770.6 L759.3 770.7 L760.7 771.2 L762.1 768.2 L763.5 769.5 L764.9 769.3 L766.3 769.5 L767.7 770.0 L769.1 770.2 L770.5 769.5 L771.9 770.3 L773.3 769.8 L774.7 769.2 L776.1 771.2 L777.5 770.8 L778.9 771.2 L780.3 771.2 L781.7 771.0 L783.1 770.1 L784.5 769.0 L785.9 769.5 L787.3 769.2 L788.7 769.9 L790.1 769.0 L791.5 769.7 L792.9 769.0 L794.3 771.2 L795.7 770.7 L797.1 771.2 L798.5 769.2 L799.9 769.7 L801.3 768.8 L802.7 771.2 L804.1 771.2 L805.5 769.6 L806.9 771.2 L808.3 771.2 L809.7 770.3 L811.1 768.9 L812.5 769.0 L813.9 769.6 L815.3 768.7 L816.7 771.2 L818.1 770.5 L819.5 771.2 L820.9 771.2 L822.3 771.2 L823.7 770.6 L825.1 770.3 L826.5 771.2 L827.9 771.0 L829.3 768.2 L830.7 768.9 L832.1 769.3 L833.5 768.6 L834.9 767.5 L836.3 768.7 L837.7 766.7 L839.1 771.2 L840.5 771.2 L841.9 770.2 L843.3 771.2 L844.7 771.2 L846.1 768.5 L847.5 767.6 L848.9 766.7 L850.3 768.4 L851.7 765.9 L853.1 768.8 L854.5 767.9 L855.9 767.6 L857.3 766.2 L858.7 771.2 L860.1 770.2 L861.5 767.7 L862.9 771.2 L864.3 764.1 L865.7 767.0 L867.1 764.9 L868.5 767.6 L869.9 771.2 L871.3 765.8 L872.7 765.6 L874.1 765.7 L875.5 768.5 L876.9 769.6 L878.3 767.0 L879.7 764.9 L881.1 766.4 L882.5 771.2 L883.9 768.6 L885.3 768.2 L886.7 767.0 L888.1 771.2 L889.5 767.7 L890.9 769.3 L892.3 766.3 L893.7 763.9 L895.1 768.3 L896.5 768.9 L897.9 765.0 L899.3 766.3 L900.7 771.2 L902.1 769.7 L903.5 767.5 L904.9 771.2 L906.3 770.8 L907.7 768.1 L909.1 765.1 L910.5 763.8 L911.9 771.2 L913.3 762.5 L914.7 763.3 L916.1 771.2 L917.5 766.0 L918.9 769.2 L920.3 771.2 L921.7 766.7 L923.1 762.3 L924.5 766.6 L925.9 766.0 L927.3 771.2 L928.6 765.2 L929.2 610.8 L929.7 610.8 L930.5 768.2 L931.5 770.2 L932.9 770.5 L934.3 771.0 L935.7 771.0 L937.1 769.8 L938.5 770.3 L939.9 770.7 L941.3 770.9 L942.7 769.7 L944.1 770.2 L944.7 771.2 L52.3 771.2 Z" fill="rgba(58,95,102,0.28)" stroke="none"/><path d="M52.3 769.6 L53.7 769.2 L55.1 771.2 L56.5 768.7 L57.9 770.2 L59.3 770.7 L60.7 768.8 L62.1 766.1 L63.5 769.5 L64.9 765.8 L66.3 767.9 L67.7 767.7 L69.1 768.3 L70.5 766.2 L71.9 768.3 L73.3 770.0 L74.7 767.0 L76.1 764.6 L77.5 771.2 L78.9 766.5 L80.3 771.2 L81.7 769.9 L83.1 766.4 L84.5 771.2 L85.9 771.2 L87.3 770.5 L88.7 770.2 L90.1 771.2 L91.5 771.2 L92.9 771.2 L94.3 768.3 L95.7 769.6 L97.1 768.5 L98.5 769.6 L99.9 769.6 L101.3 771.2 L102.7 770.3 L104.1 769.4 L105.5 768.6 L106.9 771.2 L108.3 768.3 L109.7 771.2 L111.1 770.5 L112.5 768.9 L113.9 766.2 L115.3 768.9 L116.7 767.6 L118.1 769.5 L119.5 771.2 L120.9 768.2 L122.3 767.1 L123.7 771.2 L125.1 771.0 L126.5 769.1 L127.9 767.5 L129.3 767.7 L130.7 766.2 L132.1 771.2 L133.5 766.2 L134.9 768.0 L136.3 766.7 L137.7 767.3 L139.1 767.6 L140.5 768.9 L141.9 767.5 L143.3 767.1 L144.7 768.6 L146.1 770.1 L147.5 767.8 L148.9 767.6 L150.3 767.2 L151.7 769.9 L153.1 770.0 L154.5 768.7 L155.9 770.4 L157.3 770.3 L158.7 768.6 L160.1 769.3 L161.5 771.2 L162.9 768.0 L164.3 768.2 L165.7 771.2 L167.1 768.2 L168.5 769.3 L169.9 769.7 L171.3 768.6 L172.7 767.5 L174.1 766.2 L175.5 769.6 L176.9 769.6 L178.3 771.2 L179.7 771.1 L181.1 771.2 L182.5 771.2 L183.9 769.0 L185.3 767.1 L186.7 771.2 L188.1 764.4 L189.5 765.4 L190.9 767.4 L192.3 766.3 L193.7 765.2 L195.1 771.2 L196.5 770.6 L197.9 767.2 L199.3 766.7 L200.7 768.2 L202.1 771.2 L203.5 768.8 L204.9 771.2 L206.3 767.3 L207.7 768.7 L209.1 769.0 L210.5 768.1 L211.9 770.2 L213.3 771.2 L214.7 771.2 L216.1 770.5 L217.5 767.4 L218.9 765.3 L220.3 769.0 L221.7 769.0 L223.1 767.7 L224.5 768.4 L225.9 765.3 L227.3 763.9 L228.7 767.8 L230.1 762.7 L231.5 765.5 L232.9 766.0 L234.3 769.2 L235.7 764.5 L237.1 766.1 L238.5 764.3 L239.9 767.0 L241.3 763.6 L242.7 768.8 L244.1 771.2 L245.5 769.2 L246.9 771.2 L248.3 771.2 L249.7 770.5 L251.1 769.7 L252.5 770.2 L253.9 768.5 L255.3 768.1 L256.7 771.2 L258.1 767.7 L259.5 766.6 L260.9 766.3 L262.3 771.2 L263.7 770.8 L265.1 767.8 L266.5 765.2 L267.9 771.2 L269.3 767.0 L270.7 766.6 L272.1 769.0 L273.5 764.8 L274.9 766.9 L276.3 771.2 L277.7 771.2 L279.1 766.8 L280.5 771.2 L281.9 767.5 L283.3 767.6 L284.7 770.0 L286.1 769.9 L287.5 768.8 L288.9 771.2 L290.3 771.2 L291.7 767.5 L293.1 767.9 L294.5 764.9 L295.9 764.4 L297.3 764.7 L298.7 764.4 L300.1 764.9 L301.5 768.9 L302.9 770.5 L304.3 768.0 L305.7 767.2 L307.1 767.5 L308.5 766.0 L309.9 766.7 L311.3 771.2 L312.7 770.3 L314.1 771.2 L315.5 770.8 L316.9 769.0 L318.3 768.3 L319.7 767.0 L321.1 766.8 L322.5 769.2 L323.9 771.2 L325.3 770.9 L326.7 768.7 L328.1 769.1 L329.5 769.2 L330.9 770.5 L332.3 771.2 L333.7 769.2 L335.1 770.3 L336.5 770.6 L337.9 768.4 L339.3 771.2 L340.7 767.1 L342.1 765.3 L343.5 771.2 L344.9 770.0 L346.3 770.1 L347.7 768.1 L349.1 767.6 L350.5 763.9 L351.9 767.6 L353.3 765.5 L354.7 768.0 L356.1 767.0 L357.5 768.9 L358.9 765.9 L360.3 771.2 L361.7 769.2 L363.1 771.2 L364.5 771.2 L365.9 768.9 L367.3 768.4 L368.7 767.1 L370.1 771.2 L371.5 768.4 L372.9 771.2 L374.3 767.4 L375.7 765.3 L377.1 765.8 L378.5 767.7 L379.9 769.8 L381.3 768.3 L382.7 766.3 L384.1 771.2 L385.5 771.2 L386.9 767.4 L388.3 771.2 L389.7 769.2 L391.1 767.5 L392.5 765.5 L393.9 768.0 L395.3 766.1 L396.7 771.2 L398.1 769.8 L399.5 770.1 L400.9 768.9 L402.3 769.9 L403.7 765.8 L405.1 767.5 L406.5 767.5 L407.9 771.2 L409.3 770.9 L410.7 767.3 L412.1 769.4 L413.5 769.6 L414.9 768.3 L416.3 768.8 L417.7 768.1 L419.1 766.9 L420.5 765.8 L421.9 765.5 L423.3 764.6 L424.7 765.5 L426.1 767.3 L427.5 764.6 L428.9 771.2 L430.3 769.6 L431.7 771.2 L433.1 771.2 L434.5 770.2 L435.9 767.8 L437.3 771.2 L438.7 771.2 L440.1 771.2 L441.5 770.1 L442.9 770.0 L444.3 768.2 L445.7 769.1 L447.1 769.0 L448.5 768.3 L449.9 771.2 L451.3 769.5 L452.7 769.5 L454.1 765.1 L455.5 767.8 L456.9 767.5 L458.3 771.2 L459.7 767.2 L461.1 765.3 L462.5 768.7 L463.9 771.2 L465.3 767.0 L466.7 766.1 L468.1 767.1 L469.5 765.2 L470.9 767.1 L472.3 771.2 L473.7 771.2 L475.1 770.4 L476.5 769.3 L477.9 768.2 L479.3 766.7 L480.7 767.5 L482.1 763.9 L483.5 765.4 L484.9 764.1 L486.3 765.1 L487.7 768.0 L489.1 768.8 L490.5 767.3 L491.9 771.2 L493.3 766.8 L494.7 768.4 L496.1 771.2 L497.5 771.2 L498.9 770.4 L500.3 768.4 L501.7 771.2 L503.1 771.2 L504.5 771.2 L505.9 769.1 L507.3 767.3 L508.7 765.5 L510.1 766.8 L511.5 767.3 L512.9 771.2 L514.3 768.8 L515.7 768.6 L517.1 768.2 L518.5 767.1 L519.9 768.2 L521.3 766.6 L522.7 766.4 L524.1 767.0 L525.5 771.2 L526.9 767.8 L528.3 768.3 L529.7 771.2 L531.1 771.2 L532.5 768.2 L533.9 765.4 L535.3 766.3 L536.7 768.3 L538.1 771.2 L539.5 770.3 L540.9 764.3 L542.3 771.2 L543.7 768.1 L545.1 766.9 L546.5 764.8 L547.9 771.2 L549.3 771.2 L550.7 770.5 L552.1 768.7 L553.5 770.3 L554.9 771.2 L556.3 769.4 L557.7 768.1 L559.1 768.6 L560.5 767.4 L561.9 767.9 L563.3 768.1 L564.7 768.9 L566.1 766.6 L567.5 766.4 L568.9 769.4 L570.3 768.2 L571.7 771.2 L573.1 769.9 L574.5 769.5 L575.9 765.2 L577.3 766.9 L578.7 771.2 L580.1 765.5 L581.5 768.7 L582.9 770.4 L584.3 768.7 L585.7 764.7 L587.1 765.0 L588.5 771.2 L589.9 767.4 L591.3 766.4 L592.7 762.7 L594.1 771.2 L595.5 767.6 L596.9 762.7 L598.3 767.2 L599.7 771.2 L601.1 768.9 L602.5 765.3 L603.9 762.6 L605.3 771.2 L606.7 766.1 L608.1 771.2 L609.5 765.5 L610.9 763.2 L612.3 771.2 L613.7 766.5 L615.1 769.2 L616.5 766.9 L617.9 771.2 L619.3 769.5 L620.7 771.2 L622.1 769.5 L623.5 769.4 L624.9 770.4 L626.3 768.4 L627.7 769.2 L629.1 768.2 L630.5 766.9 L631.9 765.4 L633.3 768.3 L634.7 771.2 L636.1 771.2 L637.5 766.2 L638.9 771.2 L640.3 771.2 L641.7 771.0 L643.1 768.3 L644.5 771.2 L645.9 771.2 L647.3 769.8 L648.7 770.6 L650.1 769.9 L651.5 771.2 L652.9 771.1 L654.3 770.1 L655.7 770.7 L657.1 771.2 L658.5 771.2 L659.9 769.5 L661.3 769.9 L662.7 770.7 L664.1 769.0 L665.5 768.2 L666.9 771.2 L668.3 771.2 L669.7 770.3 L671.1 771.2 L672.5 769.7 L673.9 769.6 L675.3 768.8 L676.7 768.4 L678.1 771.2 L679.5 771.1 L680.9 769.3 L682.3 769.7 L683.7 769.9 L685.1 771.2 L686.5 771.2 L687.9 771.2 L689.3 771.2 L690.7 770.3 L692.1 769.1 L693.5 770.4 L694.9 768.2 L696.3 771.2 L697.7 769.3 L699.1 769.9 L700.5 770.0 L701.9 768.2 L703.3 769.5 L704.7 770.0 L706.1 770.7 L707.5 771.2 L708.9 771.2 L710.3 771.2 L711.7 770.1 L713.1 770.3 L714.5 770.6 L715.9 769.5 L717.3 768.9 L718.7 769.8 L720.1 768.2 L721.5 769.1 L722.9 769.9 L724.3 770.4 L725.7 768.9 L727.1 771.2 L728.5 771.2 L729.9 771.1 L731.3 770.1 L732.7 771.2 L734.1 770.8 L735.5 771.2 L736.9 770.3 L738.3 769.5 L739.7 770.6 L741.1 770.9 L742.5 771.2 L743.9 770.2 L745.3 770.9 L746.7 769.9 L748.1 770.4 L749.5 769.0 L750.9 768.5 L752.3 769.1 L753.7 770.0 L755.1 770.0 L756.5 771.2 L757.9 770.6 L759.3 770.7 L760.7 771.2 L762.1 768.2 L763.5 769.5 L764.9 769.3 L766.3 769.5 L767.7 770.0 L769.1 770.2 L770.5 769.5 L771.9 770.3 L773.3 769.8 L774.7 769.2 L776.1 771.2 L777.5 770.8 L778.9 771.2 L780.3 771.2 L781.7 771.0 L783.1 770.1 L784.5 769.0 L785.9 769.5 L787.3 769.2 L788.7 769.9 L790.1 769.0 L791.5 769.7 L792.9 769.0 L794.3 771.2 L795.7 770.7 L797.1 771.2 L798.5 769.2 L799.9 769.7 L801.3 768.8 L802.7 771.2 L804.1 771.2 L805.5 769.6 L806.9 771.2 L808.3 771.2 L809.7 770.3 L811.1 768.9 L812.5 769.0 L813.9 769.6 L815.3 768.7 L816.7 771.2 L818.1 770.5 L819.5 771.2 L820.9 771.2 L822.3 771.2 L823.7 770.6 L825.1 770.3 L826.5 771.2 L827.9 771.0 L829.3 768.2 L830.7 768.9 L832.1 769.3 L833.5 768.6 L834.9 767.5 L836.3 768.7 L837.7 766.7 L839.1 771.2 L840.5 771.2 L841.9 770.2 L843.3 771.2 L844.7 771.2 L846.1 768.5 L847.5 767.6 L848.9 766.7 L850.3 768.4 L851.7 765.9 L853.1 768.8 L854.5 767.9 L855.9 767.6 L857.3 766.2 L858.7 771.2 L860.1 770.2 L861.5 767.7 L862.9 771.2 L864.3 764.1 L865.7 767.0 L867.1 764.9 L868.5 767.6 L869.9 771.2 L871.3 765.8 L872.7 765.6 L874.1 765.7 L875.5 768.5 L876.9 769.6 L878.3 767.0 L879.7 764.9 L881.1 766.4 L882.5 771.2 L883.9 768.6 L885.3 768.2 L886.7 767.0 L888.1 771.2 L889.5 767.7 L890.9 769.3 L892.3 766.3 L893.7 763.9 L895.1 768.3 L896.5 768.9 L897.9 765.0 L899.3 766.3 L900.7 771.2 L902.1 769.7 L903.5 767.5 L904.9 771.2 L906.3 770.8 L907.7 768.1 L909.1 765.1 L910.5 763.8 L911.9 771.2 L913.3 762.5 L914.7 763.3 L916.1 771.2 L917.5 766.0 L918.9 769.2 L920.3 771.2 L921.7 766.7 L923.1 762.3 L924.5 766.6 L925.9 766.0 L927.3 771.2 L928.6 765.2 L929.2 610.8 L929.7 610.8 L930.5 768.2 L931.5 770.2 L932.9 770.5 L934.3 771.0 L935.7 771.0 L937.1 769.8 L938.5 770.3 L939.9 770.7 L941.3 770.9 L942.7 769.7 L944.1 770.2" fill="none" stroke="#3a5f66" stroke-width="1.4" stroke-linejoin="round"/><line x1="52.3" y1="772.1" x2="944.7" y2="772.1" stroke="#804f35" stroke-width="2"/></svg>
<div style="position:absolute;right:1290.40px;top:604.17px;line-height:20px;font-size:12.5px;color:#ccccdc;font-weight:400;letter-spacing:0.7px;white-space:nowrap;">600</div>
<div style="position:absolute;right:1290.40px;top:656.77px;line-height:20px;font-size:12.5px;color:#ccccdc;font-weight:400;letter-spacing:0.7px;white-space:nowrap;">400</div>
<div style="position:absolute;right:1290.40px;top:709.47px;line-height:20px;font-size:12.5px;color:#ccccdc;font-weight:400;letter-spacing:0.7px;white-space:nowrap;">200</div>
<div style="position:absolute;right:1290.40px;top:762.07px;line-height:20px;font-size:12.5px;color:#ccccdc;font-weight:400;letter-spacing:0.7px;white-space:nowrap;">0</div>
<div style="position:absolute;left:-94.00px;width:400px;text-align:center;top:776.97px;line-height:20px;font-size:12.5px;color:#ccccdc;font-weight:400;letter-spacing:0.3px;white-space:nowrap;">12:00</div>
<div style="position:absolute;left:-19.57px;width:400px;text-align:center;top:776.97px;line-height:20px;font-size:12.5px;color:#ccccdc;font-weight:400;letter-spacing:0.3px;white-space:nowrap;">14:00</div>
<div style="position:absolute;left:54.86px;width:400px;text-align:center;top:776.97px;line-height:20px;font-size:12.5px;color:#ccccdc;font-weight:400;letter-spacing:0.3px;white-space:nowrap;">16:00</div>
<div style="position:absolute;left:129.29px;width:400px;text-align:center;top:776.97px;line-height:20px;font-size:12.5px;color:#ccccdc;font-weight:400;letter-spacing:0.3px;white-space:nowrap;">18:00</div>
<div style="position:absolute;left:203.72px;width:400px;text-align:center;top:776.97px;line-height:20px;font-size:12.5px;color:#ccccdc;font-weight:400;letter-spacing:0.3px;white-space:nowrap;">20:00</div>
<div style="position:absolute;left:278.15px;width:400px;text-align:center;top:776.97px;line-height:20px;font-size:12.5px;color:#ccccdc;font-weight:400;letter-spacing:0.3px;white-space:nowrap;">22:00</div>
<div style="position:absolute;left:352.58px;width:400px;text-align:center;top:776.97px;line-height:20px;font-size:12.5px;color:#ccccdc;font-weight:400;letter-spacing:0.3px;white-space:nowrap;">00:00</div>
<div style="position:absolute;left:427.01px;width:400px;text-align:center;top:776.97px;line-height:20px;font-size:12.5px;color:#ccccdc;font-weight:400;letter-spacing:0.3px;white-space:nowrap;">02:00</div>
<div style="position:absolute;left:501.44px;width:400px;text-align:center;top:776.97px;line-height:20px;font-size:12.5px;color:#ccccdc;font-weight:400;letter-spacing:0.3px;white-space:nowrap;">04:00</div>
<div style="position:absolute;left:575.87px;width:400px;text-align:center;top:776.97px;line-height:20px;font-size:12.5px;color:#ccccdc;font-weight:400;letter-spacing:0.3px;white-space:nowrap;">06:00</div>
<div style="position:absolute;left:650.30px;width:400px;text-align:center;top:776.97px;line-height:20px;font-size:12.5px;color:#ccccdc;font-weight:400;letter-spacing:0.3px;white-space:nowrap;">08:00</div>
<div style="position:absolute;left:724.73px;width:400px;text-align:center;top:776.97px;line-height:20px;font-size:12.5px;color:#ccccdc;font-weight:400;letter-spacing:0.3px;white-space:nowrap;">10:00</div>
<div style="position:absolute;right:36.50px;top:586.27px;line-height:20px;font-size:12.5px;color:#7ca2fb;font-weight:400;letter-spacing:0.25px;white-space:nowrap;-webkit-text-stroke:0.35px #7ca2fb;">Total</div>
<svg style="position:absolute;left:1299px;top:592.5px" width="10" height="8" viewBox="0 0 10 8"><path d="M2.6 3.6 L4.8 5.6 L7.0 3.6" fill="none" stroke="#7ca2fb" stroke-width="1.5" stroke-linecap="round" stroke-linejoin="round"/></svg>
<div style="position:absolute;left:953.2px;top:608px;width:360.79999999999995px;height:1px;background:rgba(204,204,220,0.075)"></div>
<div style="position:absolute;left:961.0px;top:618px;width:14px;height:4px;border-radius:2px;background:#f4c8f4"></div>
<div style="position:absolute;left:983.10px;top:609.69px;line-height:20px;font-size:13.3px;color:rgba(204,204,220,0.65);font-weight:400;letter-spacing:0.25px;white-space:nowrap;">fraud-detect-predict-666d6f4cff-cn47m</div>
<div style="position:absolute;right:28.50px;top:610.17px;line-height:20px;font-size:12.5px;color:#ccccdc;font-weight:400;letter-spacing:0.2px;white-space:nowrap;">20139</div>
<div style="position:absolute;left:953.2px;top:632px;width:360.79999999999995px;height:1px;background:rgba(204,204,220,0.075)"></div>
<div style="position:absolute;left:961.0px;top:642px;width:14px;height:4px;border-radius:2px;background:#385c62"></div>
<div style="position:absolute;left:983.10px;top:633.69px;line-height:20px;font-size:13.3px;color:#ccccdc;font-weight:400;letter-spacing:0.25px;white-space:nowrap;">card-abnormal-predict-578f949b59-qcmv2</div>
<div style="position:absolute;right:28.50px;top:634.17px;line-height:20px;font-size:12.5px;color:#ccccdc;font-weight:400;letter-spacing:0.2px;white-space:nowrap;">14507</div>
<div style="position:absolute;left:953.2px;top:656px;width:360.79999999999995px;height:1px;background:rgba(204,204,220,0.075)"></div>
<div style="position:absolute;left:961.0px;top:666px;width:14px;height:4px;border-radius:2px;background:#e05a52"></div>
<div style="position:absolute;left:983.10px;top:657.69px;line-height:20px;font-size:13.3px;color:rgba(204,204,220,0.65);font-weight:400;letter-spacing:0.25px;white-space:nowrap;">fraud-detect-predict-666d6f4cff-vdfjm</div>
<div style="position:absolute;right:28.50px;top:658.17px;line-height:20px;font-size:12.5px;color:#ccccdc;font-weight:400;letter-spacing:0.2px;white-space:nowrap;">14345</div>
<div style="position:absolute;left:953.2px;top:680px;width:360.79999999999995px;height:1px;background:rgba(204,204,220,0.075)"></div>
<div style="position:absolute;left:961.0px;top:690px;width:14px;height:4px;border-radius:2px;background:#d8f5c8"></div>
<div style="position:absolute;left:983.10px;top:681.69px;line-height:20px;font-size:13.3px;color:rgba(204,204,220,0.65);font-weight:400;letter-spacing:0.25px;white-space:nowrap;">card-abnormal-predict-578f949b59-zmmhj</div>
<div style="position:absolute;right:28.50px;top:682.17px;line-height:20px;font-size:12.5px;color:#ccccdc;font-weight:400;letter-spacing:0.2px;white-space:nowrap;">12692</div>
<div style="position:absolute;left:953.2px;top:703px;width:360.79999999999995px;height:1px;background:rgba(204,204,220,0.075)"></div>
<div style="position:absolute;left:961.0px;top:713px;width:14px;height:4px;border-radius:2px;background:#e45a50"></div>
<div style="position:absolute;left:983.10px;top:704.69px;line-height:20px;font-size:13.3px;color:rgba(204,204,220,0.65);font-weight:400;letter-spacing:0.25px;white-space:nowrap;">fraud-detect-predict-666d6f4cff-vpmvk</div>
<div style="position:absolute;right:28.50px;top:705.17px;line-height:20px;font-size:12.5px;color:#ccccdc;font-weight:400;letter-spacing:0.2px;white-space:nowrap;">12552</div>
<div style="position:absolute;left:953.2px;top:727px;width:360.79999999999995px;height:1px;background:rgba(204,204,220,0.075)"></div>
<div style="position:absolute;left:961.0px;top:737px;width:14px;height:4px;border-radius:2px;background:#e38a80"></div>
<div style="position:absolute;left:983.10px;top:728.69px;line-height:20px;font-size:13.3px;color:rgba(204,204,220,0.65);font-weight:400;letter-spacing:0.25px;white-space:nowrap;">card-abnormal-predict-578f949b59-tlbk8</div>
<div style="position:absolute;right:28.50px;top:729.17px;line-height:20px;font-size:12.5px;color:#ccccdc;font-weight:400;letter-spacing:0.2px;white-space:nowrap;">11658</div>
<div style="position:absolute;left:953.2px;top:751px;width:360.79999999999995px;height:1px;background:rgba(204,204,220,0.075)"></div>
<div style="position:absolute;left:961.0px;top:761px;width:14px;height:4px;border-radius:2px;background:#73bf69"></div>
<div style="position:absolute;left:983.10px;top:752.69px;line-height:20px;font-size:13.3px;color:rgba(204,204,220,0.65);font-weight:400;letter-spacing:0.25px;white-space:nowrap;">account-takeover-predict-db49b9d5f-gh5rf</div>
<div style="position:absolute;right:28.50px;top:753.17px;line-height:20px;font-size:12.5px;color:#ccccdc;font-weight:400;letter-spacing:0.2px;white-space:nowrap;">0</div>
<div style="position:absolute;left:953.2px;top:775px;width:360.79999999999995px;height:1px;background:rgba(204,204,220,0.075)"></div>
<div style="position:absolute;left:961.0px;top:785px;width:14px;height:4px;border-radius:2px;background:#fade2a"></div>
<div style="position:absolute;left:983.10px;top:776.69px;line-height:20px;font-size:13.3px;color:rgba(204,204,220,0.65);font-weight:400;letter-spacing:0.25px;white-space:nowrap;">account-takeover-predict-db49b9d5f-q75vz</div>
<div style="position:absolute;right:28.50px;top:777.17px;line-height:20px;font-size:12.5px;color:#ccccdc;font-weight:400;letter-spacing:0.2px;white-space:nowrap;">0</div>
</div></body></html>
